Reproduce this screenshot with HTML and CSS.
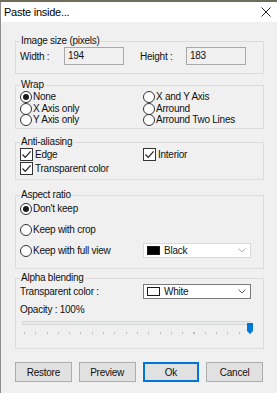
FILE: index.html
```html
<!DOCTYPE html>
<html lang="en">
<head>
  <meta charset="UTF-8">
  <title>Paste inside...</title>
  <link rel="stylesheet" href="styles.css">
</head>
<body>
  <div class="window">
    <div class="titlebar">
      <span class="title">Paste inside...</span>
      <svg class="close" width="10" height="10" viewBox="0 0 10 10">
        <path d="M0.5 0.5 L9.5 9.5 M9.5 0.5 L0.5 9.5" stroke="#222" stroke-width="1" fill="none"/>
      </svg>
    </div>

    <div class="content">
      <fieldset class="group group-size">
        <legend>Image size (pixels)</legend>
        <div class="size-row">
          <span class="size-label">Width :</span>
          <div class="field">194</div>
          <span class="size-label second">Height :</span>
          <div class="field">183</div>
        </div>
      </fieldset>

      <fieldset class="group group-wrap">
        <legend>Wrap</legend>
        <div class="two-cols">
          <div class="option"><span class="radio checked"></span>None</div>
          <div class="option"><span class="radio"></span>X and Y Axis</div>
          <div class="option"><span class="radio"></span>X Axis only</div>
          <div class="option"><span class="radio"></span>Arround</div>
          <div class="option"><span class="radio"></span>Y Axis only</div>
          <div class="option"><span class="radio"></span>Arround Two Lines</div>
        </div>
      </fieldset>

      <fieldset class="group group-aa">
        <legend>Anti-aliasing</legend>
        <div class="two-cols check-cols">
          <div class="option"><span class="check"><svg width="11" height="11" viewBox="0 0 11 11"><path d="M1.5 5.5 L4.2 8.3 L9.6 2.3" stroke="#222" stroke-width="1.2" fill="none"/></svg></span>Edge</div>
          <div class="option"><span class="check"><svg width="11" height="11" viewBox="0 0 11 11"><path d="M1.5 5.5 L4.2 8.3 L9.6 2.3" stroke="#222" stroke-width="1.2" fill="none"/></svg></span>Interior</div>
          <div class="option"><span class="check"><svg width="11" height="11" viewBox="0 0 11 11"><path d="M1.5 5.5 L4.2 8.3 L9.6 2.3" stroke="#222" stroke-width="1.2" fill="none"/></svg></span>Transparent color</div>
        </div>
      </fieldset>

      <fieldset class="group group-aspect">
        <legend>Aspect ratio</legend>
        <div class="aspect-row"><div class="option"><span class="radio checked"></span>Don't keep</div></div>
        <div class="aspect-row"><div class="option"><span class="radio"></span>Keep with crop</div></div>
        <div class="aspect-row">
          <div class="option"><span class="radio"></span>Keep with full view</div>
          <div class="combo light">
            <span class="swatch black"></span>Black
            <svg class="chevron" width="8" height="5" viewBox="0 0 8 5"><path d="M0.5 0.5 L4 4 L7.5 0.5" stroke="#b0b0b0" fill="none"/></svg>
          </div>
        </div>
      </fieldset>

      <fieldset class="group group-alpha">
        <legend>Alpha blending</legend>
        <div class="alpha-row">
          <span>Transparent color :</span>
          <div class="combo">
            <span class="swatch white"></span>White
            <svg class="chevron" width="8" height="5" viewBox="0 0 8 5"><path d="M0.5 0.5 L4 4 L7.5 0.5" stroke="#606060" fill="none"/></svg>
          </div>
        </div>
        <div class="opacity-label">Opacity : 100%</div>
        <div class="slider">
          <div class="track"></div>
          <svg class="thumb" width="6" height="11" viewBox="0 0 6 11"><path d="M0 0 H6 V8 L3 11 L0 8 Z" fill="#0078d7"/></svg>
          <div class="ticks"></div>
        </div>
      </fieldset>

      <div class="buttons">
        <button class="btn">Restore</button>
        <button class="btn">Preview</button>
        <button class="btn default">Ok</button>
        <button class="btn">Cancel</button>
      </div>
    </div>
  </div>
</body>
</html>
```

FILE: styles.css
```css
* {
  box-sizing: border-box;
}
html, body {
  margin: 0;
  padding: 0;
}
body {
  font-family: "Liberation Sans", Arial, sans-serif;
  font-size: 10px;
  letter-spacing: -0.25px;
  color: #111;
  background: #6f6c5c;
  width: 277px;
  height: 393px;
  overflow: hidden;
}
.window {
  margin-top: 2px;
  height: 391px;
  background: #f0f0f0;
  border-left: 1px solid #8c8c8c;
}
.titlebar {
  height: 20px;
  background: #ffffff;
  display: flex;
  align-items: center;
  justify-content: space-between;
  padding: 0 6px 0 3px;
}
.title {
  font-size: 11px;
  color: #000;
}
.content {
  padding: 13px 13px 0 14px;
}
.group {
  margin: 0;
  padding: 0 4px 8px 4px;
  border: 1px solid #dcdcdc;
  min-width: 0;
}
.group legend {
  padding: 0 1px;
  line-height: 12px;
}

/* image size */
.size-row {
  display: flex;
  align-items: center;
  height: 18px;
}
.size-label {
  width: 44px;
}
.size-label.second {
  margin-left: 16px;
  width: 46px;
}
.field {
  width: 60px;
  height: 18px;
  border: 1px solid #a8a8a8;
  padding: 2px 3px;
  line-height: 12px;
}

.group-wrap {
  margin-top: 5px;
  padding-bottom: 2px;
}
.two-cols {
  display: grid;
  grid-template-columns: 123px 1fr;
}
.option {
  display: flex;
  align-items: center;
  height: 12px;
  line-height: 12px;
  white-space: nowrap;
}
.group-wrap .option {
  height: 11.7px;
}
.radio {
  width: 12px;
  height: 12px;
  border: 1px solid #333;
  border-radius: 50%;
  background: #fff;
  margin-right: 1px;
  display: flex;
  align-items: center;
  justify-content: center;
  flex-shrink: 0;
}
.radio.checked::after {
  content: "";
  width: 6px;
  height: 6px;
  border-radius: 50%;
  background: #1a1a1a;
}

.group-aa {
  margin-top: 7px;
  padding-bottom: 4px;
}
.check-cols {
  row-gap: 1px;
}
.check-cols .option {
  height: 13px;
}
.check {
  width: 13px;
  height: 13px;
  border: 1px solid #333;
  background: #fff;
  margin-right: 2px;
  display: flex;
  align-items: center;
  justify-content: center;
  flex-shrink: 0;
}

.group-aspect {
  margin-top: 9px;
  padding-bottom: 7px;
}
.aspect-row {
  display: flex;
  align-items: center;
  justify-content: space-between;
  height: 21px;
  padding-right: 8px;
}
.aspect-row:first-of-type {
  margin-top: -3px;
}
.combo {
  width: 108px;
  height: 15px;
  background: #fff;
  border: 1px solid #7a7a7a;
  display: flex;
  align-items: center;
  padding: 0 4px 0 3px;
}
.combo.light {
  border-color: #d9d9d9;
}
.swatch {
  width: 13px;
  height: 9px;
  margin-right: 4px;
  border: 1px solid #1a1a1a;
}
.swatch.black {
  background: #000;
}
.swatch.white {
  background: #fff;
}
.chevron {
  margin-left: auto;
}

.group-alpha {
  margin-top: 3px;
  padding-bottom: 14px;
}
.alpha-row {
  display: flex;
  align-items: center;
  justify-content: space-between;
  height: 15px;
  padding-right: 8px;
}
.opacity-label {
  margin-top: 5px;
  line-height: 12px;
}
.slider {
  position: relative;
  margin: 0 8px 0 2px;
}
.track {
  margin-top: 5px;
  height: 4px;
  background: #e7eaea;
  border: 1px solid #d6d6d6;
}
.thumb {
  position: absolute;
  right: -2px;
  top: 2px;
}
.ticks {
  margin-top: 7px;
  height: 2px;
  background: repeating-linear-gradient(to right, #bcbcbc 0 1px, transparent 1px 11.3px);
  margin-left: 2px;
}

.buttons {
  display: grid;
  grid-template-columns: repeat(4, 1fr);
  column-gap: 7px;
  margin-top: 13px;
  padding-right: 1px;
}
.btn {
  height: 20px;
  font-family: inherit;
  font-size: 10px;
  letter-spacing: inherit;
  color: #111;
  background: #e1e1e1;
  border: 1px solid #adadad;
  padding: 0;
}
.btn.default {
  border-color: #0078d7;
  box-shadow: inset 0 0 0 1px #0078d7;
}
```
